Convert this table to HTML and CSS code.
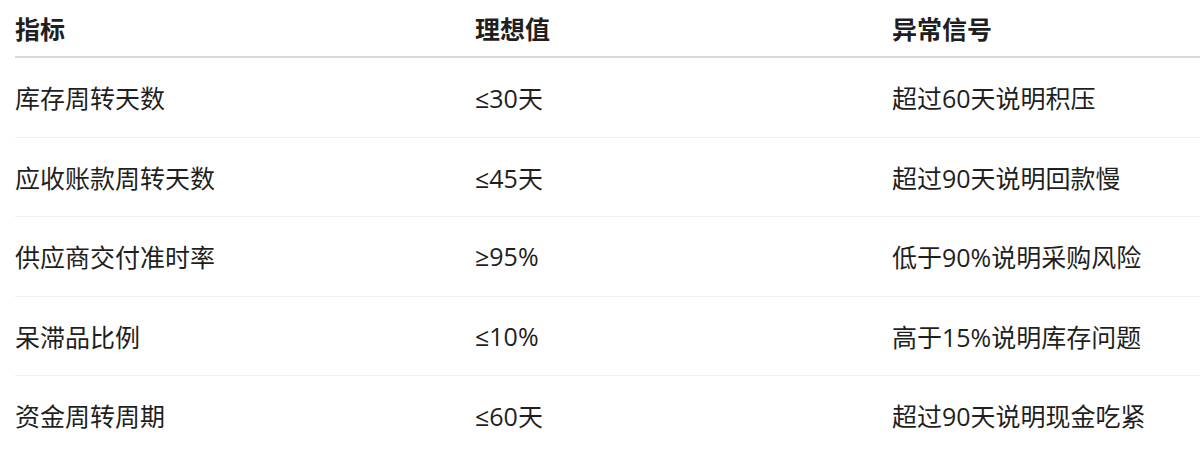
FILE: index.html
```html
<!DOCTYPE html>
<html lang="zh-CN">
<head>
<meta charset="utf-8">
<title>指标</title>
<link rel="stylesheet" href="styles.css">
</head>
<body>
<table class="metrics">
  <colgroup>
    <col class="col-name">
    <col class="col-ideal">
    <col class="col-signal">
  </colgroup>
  <thead>
    <tr><th>指标</th><th>理想值</th><th>异常信号</th></tr>
  </thead>
  <tbody>
    <tr><td>库存周转天数</td><td>≤30天</td><td>超过60天说明积压</td></tr>
    <tr><td>应收账款周转天数</td><td>≤45天</td><td>超过90天说明回款慢</td></tr>
    <tr><td>供应商交付准时率</td><td>≥95%</td><td>低于90%说明采购风险</td></tr>
    <tr><td>呆滞品比例</td><td>≤10%</td><td>高于15%说明库存问题</td></tr>
    <tr><td>资金周转周期</td><td>≤60天</td><td>超过90天说明现金吃紧</td></tr>
  </tbody>
</table>
</body>
</html>
```

FILE: styles.css
```css
html, body {
  margin: 0;
  padding: 0;
  background: #ffffff;
}

body {
  font-family: "Open Sans", "Noto Sans CJK SC", sans-serif;
  font-size: 25px;
  color: #1f1f1f;
}

.metrics {
  margin-left: 15px;
  width: calc(100% - 15px);
  border-collapse: collapse;
  table-layout: fixed;
}

.col-name { width: 460px; }
.col-ideal { width: 417px; }

.metrics th,
.metrics td {
  text-align: left;
  padding: 0;
  vertical-align: middle;
}

.metrics th {
  font-weight: 700;
  height: 56px;
  border-bottom: 2px solid #dadada;
}

.metrics td {
  height: 78.5px;
  border-bottom: 1px solid #efefef;
}

.metrics tbody tr:last-child td {
  border-bottom: none;
}
```
